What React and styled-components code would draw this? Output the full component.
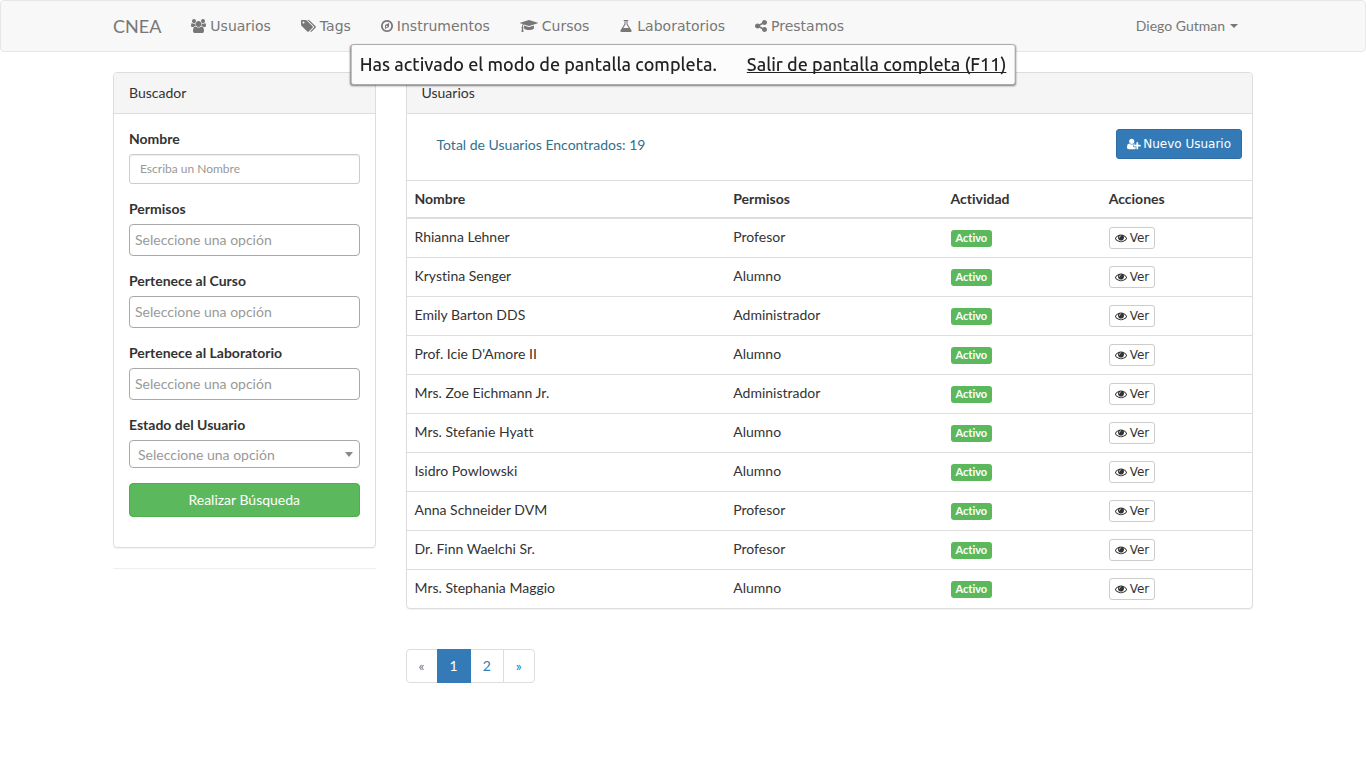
import React from "react";
import styled, { createGlobalStyle, css } from "styled-components";

const GlobalStyle = createGlobalStyle`
  *, *::before, *::after { box-sizing: border-box; }
  body {
    margin: 0;
    background: #fff;
    color: #333;
    font-family: Lato, "Liberation Sans", sans-serif;
    font-size: 14px;
    font-variant-ligatures: none;
    line-height: 20px;
  }
  a { color: #337ab7; text-decoration: none; }
  input, select, button { font-family: inherit; font-variant-ligatures: none; margin: 0; }
`;

/* ---------- icons ---------- */

const ICONS = {
  users: [1920, "M593 896q-162 5-265 128h-134q-82 0-138-40.5t-56-118.5q0-353 124-353 6 0 43.5 21t97.5 42.5 119 21.5q67 0 133-23-5 37-5 66 0 139 81 256zm1071 637q0 120-73 189.5t-194 69.5h-874q-121 0-194-69.5t-73-189.5q0-53 3.5-103.5t14-109 26.5-108.5 43-97.5 62-81 85.5-53.5 111.5-20q10 0 43 21.5t73 48 107 48 135 21.5 135-21.5 107-48 73-48 43-21.5q61 0 111.5 20t85.5 53.5 62 81 43 97.5 26.5 108.5 14 109 3.5 103.5zm-1024-1277q0 106-75 181t-181 75-181-75-75-181 75-181 181-75 181 75 75 181zm704 384q0 159-112.5 271.5t-271.5 112.5-271.5-112.5-112.5-271.5 112.5-271.5 271.5-112.5 271.5 112.5 112.5 271.5zm576 225q0 78-56 118.5t-138 40.5h-134q-103-123-265-128 81-117 81-256 0-29-5-66 66 23 133 23 59 0 119-21.5t97.5-42.5 43.5-21q124 0 124 353zm-128-609q0 106-75 181t-181 75-181-75-75-181 75-181 181-75 181 75 75 181z"],
  tags: [1920, "M448 448q0-53-37.5-90.5t-90.5-37.5-90.5 37.5-37.5 90.5 37.5 90.5 90.5 37.5 90.5-37.5 37.5-90.5zm1067 576q0 53-37 90l-491 492q-39 37-91 37-53 0-90-37l-715-716q-38-37-64.5-101t-26.5-117v-416q0-52 38-90t90-38h416q53 0 117 26.5t102 64.5l715 714q37 39 37 91zm384 0q0 53-37 90l-491 492q-39 37-91 37-36 0-59-14t-53-45l470-470q37-37 37-90 0-52-37-91l-715-714q-38-38-102-64.5t-117-26.5h224q53 0 117 26.5t102 64.5l715 714q37 39 37 91z"],
  compass: [1536, "M640 1088l256-128-256-128v256zm384-591v542l-512 256v-542zm288 399q0-148-73-273t-198-198-273-73-273 73-198 198-73 273 73 273 198 198 273 73 273-73 198-198 73-273zm224 0q0 209-103 385.5t-279.5 279.5-385.5 103-385.5-103-279.5-279.5-103-385.5 103-385.5 279.5-279.5 385.5-103 385.5 103 279.5 279.5 103 385.5z"],
  cap: [2304, "M1774 836l18 316q4 69-82 128t-235 93.5-323 34.5-323-34.5-235-93.5-82-128l18-316 574 181q22 7 48 7t48-7zm530-324q0 23-22 31l-1120 352q-4 1-10 1t-10-1l-652-206q-43 34-71 111.5t-34 178.5q63 36 63 109 0 69-58 107l58 433q2 14-8 25-9 11-24 11h-192q-15 0-24-11-10-11-8-25l58-433q-58-38-58-107 0-73 65-111 11-207 98-330l-333-104q-22-8-22-31t22-31l1120-352q4-1 10-1t10 1l1120 352q22 8 22 31z"],
  flask: [1792, "M1591 1448q56 89 21.5 152.5t-140.5 63.5h-1152q-106 0-140.5-63.5t21.5-152.5l503-793v-399h-64q-26 0-45-19t-19-45 19-45 45-19h512q26 0 45 19t19 45-19 45-45 19h-64v399zm-779-725l-272 429h712l-272-429-20-31v-436h-128v436z"],
  share: [1536, "M1216 1024q133 0 226.5 93.5t93.5 226.5-93.5 226.5-226.5 93.5-226.5-93.5-93.5-226.5q0-12 2-34l-360-180q-92 86-218 86-133 0-226.5-93.5t-93.5-226.5 93.5-226.5 226.5-93.5q126 0 218 86l360-180q-2-22-2-34 0-133 93.5-226.5t226.5-93.5 226.5 93.5 93.5 226.5-93.5 226.5-226.5 93.5q-126 0-218-86l-360 180q2 22 2 34t-2 34l360 180q92-86 218-86z"],
  userPlus: [2048, "M704 896q-159 0-271.5-112.5t-112.5-271.5 112.5-271.5 271.5-112.5 271.5 112.5 112.5 271.5-112.5 271.5-271.5 112.5zm960 128h352q13 0 22.5 9.5t9.5 22.5v192q0 13-9.5 22.5t-22.5 9.5h-352v352q0 13-9.5 22.5t-22.5 9.5h-192q-13 0-22.5-9.5t-9.5-22.5v-352h-352q-13 0-22.5-9.5t-9.5-22.5v-192q0-13 9.5-22.5t22.5-9.5h352v-352q0-13 9.5-22.5t22.5-9.5h192q13 0 22.5 9.5t9.5 22.5v352zm-736 224q0 52 38 90t90 38h256v238q-68 50-171 50h-874q-121 0-194-69t-73-190q0-53 3.5-103.5t14-109 26.5-108.5 43-97.5 62-81 85.5-53.5 111.5-20q19 0 39 17 79 61 154.5 91.5t164.5 30.5 164.5-30.5 154.5-91.5q20-17 39-17 132 0 217 96h-223q-52 0-90 38t-38 90v192z"],
  eye: [1792, "M1664 960q-152-236-381-353 61 104 61 225 0 185-131.5 316.5t-316.5 131.5-316.5-131.5-131.5-316.5q0-121 61-225-229 117-381 353 133 205 333.5 326.5t434.5 121.5 434.5-121.5 333.5-326.5zm-720-384q0-20-14-34t-34-14q-125 0-214.5 89.5t-89.5 214.5q0 20 14 34t34 14 34-14 14-34q0-86 61-147t147-61q20 0 34-14t14-34zm848 384q0 34-20 69-140 230-376.5 368.5t-499.5 138.5-499.5-139-376.5-368q-20-35-20-69t20-69q140-229 376.5-368t499.5-139 499.5 139 376.5 368q20 35 20 69z"],
};

const IconSvg = styled.svg`
  flex: none;
  display: block;
  height: ${(p) => p.$size}px;
  width: auto;
  fill: currentColor;
`;

function Icon({ name, size = 14 }) {
  const [width, d] = ICONS[name];
  return (
    <IconSvg $size={size} viewBox={`0 0 ${width} 1792`} aria-hidden="true">
      <path d={d} />
    </IconSvg>
  );
}

/* ---------- navigation ---------- */

const Navbar = styled.header`
  border: 1px solid #e7e7e7;
  border-radius: 4px;
  background: #f8f8f8;
  margin-bottom: 20px;
`;

const Container = styled.div`
  width: 100%;
  max-width: 1170px;
  margin: 0 auto;
  padding: 0 15px;
`;

const NavContainer = styled(Container)`
  display: flex;
  align-items: center;
  min-height: 50px;
`;

const Brand = styled.a`
  color: #777;
  font-size: 18px;
  padding-right: 15px;
`;

const NavList = styled.nav`
  display: flex;
  flex: 1;
`;

const NavLink = styled.a`
  display: flex;
  align-items: center;
  gap: 4px;
  padding: 15px;
  color: #777;
  font-family: "DejaVu Sans", sans-serif;
`;

const UserMenu = styled.button`
  display: flex;
  align-items: center;
  gap: 5px;
  padding: 15px;
  border: 0;
  background: none;
  color: #777;
  font-size: 14px;
  line-height: 20px;
`;

const Caret = styled.span`
  border: 4px solid transparent;
  border-top-color: currentColor;
  border-bottom: 0;
`;

/* ---------- fullscreen notice ---------- */

const Notice = styled.div`
  position: fixed;
  z-index: 10;
  top: 44px;
  left: 50%;
  transform: translateX(-50%);
  display: flex;
  gap: 30px;
  padding: 7px 8px;
  border: 1px solid #aaa;
  border-radius: 3px;
  background: #fcfcfc;
  box-shadow: 0 1px 2px rgba(0, 0, 0, 0.5);
  color: #222;
  font-family: Ubuntu, "Noto Sans", sans-serif;
  font-size: 18px;
  font-weight: 500;
  line-height: 25px;
  white-space: nowrap;
`;

const NoticeLink = styled.a`
  color: inherit;
  text-decoration: underline;
  text-decoration-skip-ink: none;
`;

/* ---------- panels ---------- */

const Columns = styled.main`
  display: flex;
  align-items: flex-start;
  width: 100%;
  max-width: 1170px;
  margin: 0 auto;
`;

const Column = styled.div`
  width: ${(p) => p.$width};
  min-width: 0;
  padding: 0 15px;
`;

const Panel = styled.section`
  border: 1px solid #ddd;
  border-radius: 4px;
  background: #fff;
  box-shadow: 0 1px 1px rgba(0, 0, 0, 0.05);
  margin-bottom: 20px;
`;

const PanelTitle = styled.h2`
  margin: 0;
  padding: 10px 15px;
  border-bottom: 1px solid #ddd;
  border-radius: 3px 3px 0 0;
  background: #f5f5f5;
  font-size: 14px;
  font-weight: 400;
`;

const Divider = styled.hr`
  margin: 0;
  border: 0;
  border-top: 1px solid #eee;
`;

/* ---------- search form ---------- */

const SearchForm = styled.form`
  display: flex;
  flex-direction: column;
  gap: 15px;
  padding: 15px 15px 30px;
`;

const Field = styled.div`
  display: flex;
  flex-direction: column;
  gap: 5px;
`;

const Label = styled.label`
  font-weight: 700;
`;

const control = css`
  width: 100%;
  border: 1px solid #aaa;
  border-radius: 4px;
  background: #fff;
  font-size: 14px;
  line-height: 20px;
`;

const TextInput = styled.input`
  ${control}
  height: 30px;
  padding: 4px 10px 6px;
  border-color: #ccc;
  border-radius: 3px;
  box-shadow: inset 0 1px 1px rgba(0, 0, 0, 0.075);
  font-size: 12px;
  &::placeholder { color: #999; opacity: 1; }
`;

const TagInput = styled.input`
  ${control}
  height: 32px;
  padding: 0 5px 2px;
  &::placeholder { color: #999; opacity: 1; }
`;

const SelectBox = styled.div`
  position: relative;
`;

const Select = styled.select`
  ${control}
  display: block;
  appearance: none;
  height: 28px;
  padding: 2px 20px 0 8px;
  color: #999;
`;

const SelectArrow = styled.span`
  position: absolute;
  top: 12px;
  right: 7px;
  border: 4px solid transparent;
  border-top: 5px solid #888;
  border-bottom: 0;
  pointer-events: none;
`;

const SearchButton = styled.button`
  height: 34px;
  border: 1px solid #4cae4c;
  border-radius: 4px;
  background: #5cb85c;
  color: #fff;
  font-size: 14px;
  line-height: 20px;
`;

/* ---------- results ---------- */

const Summary = styled.div`
  display: flex;
  align-items: flex-start;
  justify-content: space-between;
  padding: 15px 10px 21px 30px;
`;

const Total = styled.p`
  margin: 0;
  padding-top: 6px;
  color: #31708f;
`;

const NewUserButton = styled.button`
  display: flex;
  align-items: center;
  gap: 2px;
  height: 30px;
  padding: 0 10px;
  border: 1px solid #2e6da4;
  border-radius: 3px;
  background: #337ab7;
  color: #fff;
  font-family: "DejaVu Sans", sans-serif;
  font-size: 12px;
  line-height: 18px;
`;

const Table = styled.table`
  width: 100%;
  table-layout: fixed;
  border-collapse: separate;
  border-spacing: 0;
  border-top: 1px solid #ddd;

  th, td {
    padding: 8px;
    text-align: left;
    vertical-align: top;
  }
  th { border-bottom: 2px solid #ddd; }
  tbody tr + tr td { border-top: 1px solid #ddd; }
`;

const HeadCell = styled.th`
  width: ${(p) => p.$width};
`;

const Status = styled.span`
  display: block;
  width: fit-content;
  margin-top: 3px;
  padding: 0 5px 2px;
  border-radius: 3px;
  background: #5cb85c;
  color: #fff;
  font-size: 11px;
  font-weight: 700;
  line-height: 15px;
`;

const ViewButton = styled.button`
  display: flex;
  align-items: center;
  gap: 3px;
  height: 22px;
  padding: 0 5px;
  border: 1px solid #ccc;
  border-radius: 3px;
  background: #fff;
  color: #333;
  font-family: "DejaVu Sans", sans-serif;
  font-size: 12px;
  line-height: 18px;
`;

const Pagination = styled.nav`
  display: flex;
  margin: 40px 0 20px;
`;

const PageLink = styled.a`
  padding: 6px 12px;
  border: 1px solid ${(p) => (p.$active ? "#337ab7" : "#ddd")};
  background: ${(p) => (p.$active ? "#337ab7" : "#fff")};
  color: ${(p) => (p.$active ? "#fff" : p.$disabled ? "#777" : "#337ab7")};
  position: relative;
  z-index: ${(p) => (p.$active ? 1 : 0)};

  & + & { margin-left: -1px; }
  &:first-child { border-radius: 4px 0 0 4px; }
  &:last-child { border-radius: 0 4px 4px 0; }
`;

const NAV = [
  ["users", "Usuarios"],
  ["tags", "Tags"],
  ["compass", "Instrumentos"],
  ["cap", "Cursos"],
  ["flask", "Laboratorios"],
  ["share", "Prestamos"],
];

const TAG_FIELDS = [
  ["permisos", "Permisos"],
  ["curso", "Pertenece al Curso"],
  ["laboratorio", "Pertenece al Laboratorio"],
];

const USERS = [
  ["Rhianna Lehner", "Profesor"],
  ["Krystina Senger", "Alumno"],
  ["Emily Barton DDS", "Administrador"],
  ["Prof. Icie D'Amore II", "Alumno"],
  ["Mrs. Zoe Eichmann Jr.", "Administrador"],
  ["Mrs. Stefanie Hyatt", "Alumno"],
  ["Isidro Powlowski", "Alumno"],
  ["Anna Schneider DVM", "Profesor"],
  ["Dr. Finn Waelchi Sr.", "Profesor"],
  ["Mrs. Stephania Maggio", "Alumno"],
];

export default function App() {
  return (
    <>
      <GlobalStyle />
      <Navbar>
        <NavContainer>
          <Brand href="#">CNEA</Brand>
          <NavList>
            {NAV.map(([icon, text]) => (
              <NavLink key={text} href="#">
                <Icon name={icon} />
                {text}
              </NavLink>
            ))}
          </NavList>
          <UserMenu type="button">
            Diego Gutman
            <Caret />
          </UserMenu>
        </NavContainer>
      </Navbar>

      <Notice role="status">
        <span>Has activado el modo de pantalla completa.</span>
        <NoticeLink href="#">Salir de pantalla completa (F11)</NoticeLink>
      </Notice>

      <Columns>
        <Column $width="25%">
          <Panel>
            <PanelTitle>Buscador</PanelTitle>
            <SearchForm>
              <Field>
                <Label htmlFor="nombre">Nombre</Label>
                <TextInput id="nombre" type="text" placeholder="Escriba un Nombre" />
              </Field>
              {TAG_FIELDS.map(([id, text]) => (
                <Field key={id}>
                  <Label htmlFor={id}>{text}</Label>
                  <TagInput id={id} type="text" placeholder="Seleccione una opción" />
                </Field>
              ))}
              <Field>
                <Label htmlFor="estado">Estado del Usuario</Label>
                <SelectBox>
                  <Select id="estado">
                    <option>Seleccione una opción</option>
                  </Select>
                  <SelectArrow />
                </SelectBox>
              </Field>
              <SearchButton type="button">Realizar Búsqueda</SearchButton>
            </SearchForm>
          </Panel>
          <Divider />
        </Column>

        <Column $width="75%">
          <Panel>
            <PanelTitle>Usuarios</PanelTitle>
            <Summary>
              <Total>Total de Usuarios Encontrados: 19</Total>
              <NewUserButton type="button">
                <Icon name="userPlus" size={12} />
                Nuevo Usuario
              </NewUserButton>
            </Summary>
            <Table>
              <thead>
                <tr>
                  <HeadCell $width="37.7%">Nombre</HeadCell>
                  <HeadCell $width="25.7%">Permisos</HeadCell>
                  <HeadCell $width="18.7%">Actividad</HeadCell>
                  <HeadCell>Acciones</HeadCell>
                </tr>
              </thead>
              <tbody>
                {USERS.map(([name, role]) => (
                  <tr key={name}>
                    <td>{name}</td>
                    <td>{role}</td>
                    <td><Status>Activo</Status></td>
                    <td>
                      <ViewButton type="button">
                        <Icon name="eye" size={12} />
                        Ver
                      </ViewButton>
                    </td>
                  </tr>
                ))}
              </tbody>
            </Table>
          </Panel>
          <Pagination aria-label="Páginas">
            <PageLink href="#" $disabled>«</PageLink>
            <PageLink href="#" $active>1</PageLink>
            <PageLink href="#">2</PageLink>
            <PageLink href="#">»</PageLink>
          </Pagination>
        </Column>
      </Columns>
    </>
  );
}
